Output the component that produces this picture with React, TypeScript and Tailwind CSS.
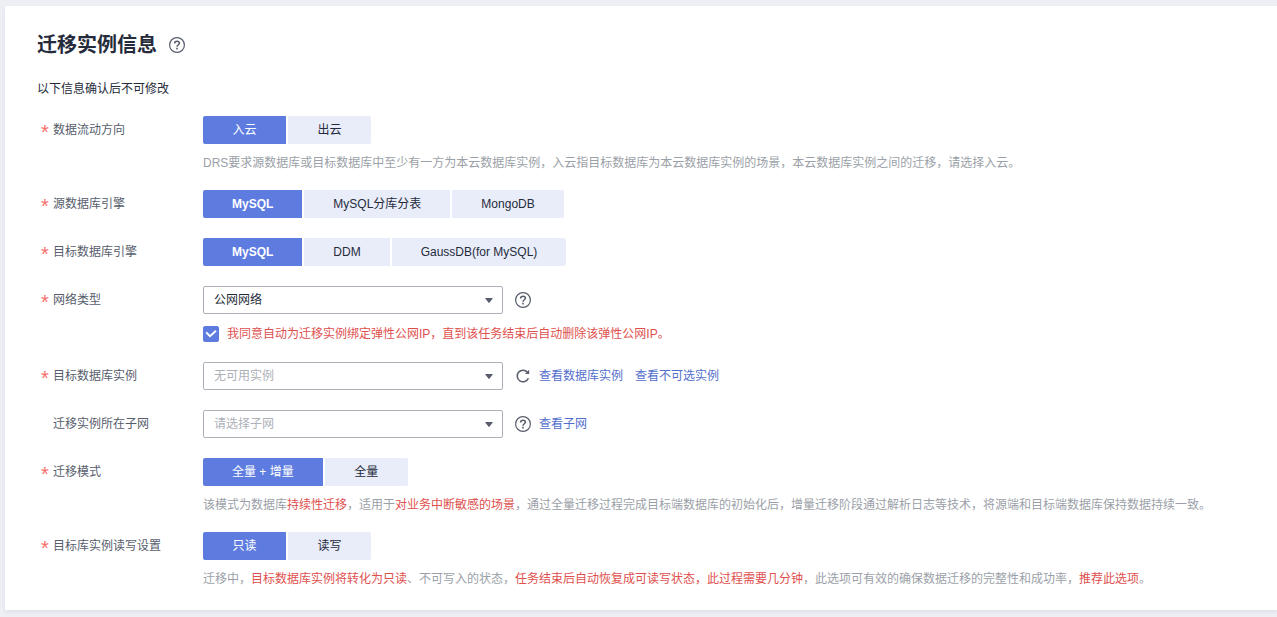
import { useId, useState, type ReactNode } from 'react';
import clsx from 'clsx';

type RowProps = {
  label: string;
  htmlFor?: string;
  labelId?: string;
  required?: boolean;
  children: ReactNode;
};

function Row({ label, htmlFor, labelId, required = true, children }: RowProps) {
  return (
    <div className="flex items-start">
      <div className="flex h-7 w-[166px] shrink-0 items-center text-[#575d6c]">
        <span className="w-4 pl-1 pt-1 text-xl leading-5 text-[#f66f6a]" aria-hidden="true">
          {required ? '*' : ''}
        </span>
        {htmlFor ? (
          <label htmlFor={htmlFor}>{label}</label>
        ) : (
          <span id={labelId}>{label}</span>
        )}
      </div>
      <div className="min-w-0 flex-1">{children}</div>
    </div>
  );
}

type ChoiceRowProps = {
  label: string;
  options: string[];
  children?: ReactNode;
};

// Product names get a heavier weight when selected, Chinese labels stay regular
const isLatin = (text: string) => /^[\x20-\x7e]+$/.test(text);

function ChoiceRow({ label, options, children }: ChoiceRowProps) {
  const id = useId();
  const [selected, setSelected] = useState(options[0]);

  return (
    <Row label={label} labelId={id}>
      <div role="group" aria-labelledby={id} className="flex gap-0.5">
        {options.map((option) => {
          const active = option === selected;
          return (
            <button
              key={option}
              type="button"
              aria-pressed={active}
              onClick={() => setSelected(option)}
              className={clsx(
                'h-7 min-w-[83px] cursor-pointer px-[29px] first:rounded-l-xs last:rounded-r-xs',
                active ? 'bg-[#5e7ce0] text-white' : 'bg-[#e9edfa] text-[#252b3a]',
                active && isLatin(option) && 'font-bold',
              )}
            >
              {option}
            </button>
          );
        })}
      </div>
      {children && <p className="mt-[11px] -mb-px leading-4 text-[#9b9fa8]">{children}</p>}
    </Row>
  );
}

type DropdownProps = {
  id: string;
  value: string;
  muted?: boolean;
};

function Dropdown({ id, value, muted }: DropdownProps) {
  return (
    <div className="relative w-[300px]">
      <select
        id={id}
        className={clsx(
          'block h-7 w-full appearance-none rounded-xs border border-[#adb0b8] bg-white px-2.5',
          muted ? 'text-[#adb0b8]' : 'text-[#252b3a]',
        )}
      >
        <option>{value}</option>
      </select>
      <svg
        className="pointer-events-none absolute right-2.5 top-3 h-[5px] w-2 text-[#575d6c]"
        viewBox="0 0 8 5"
        fill="currentColor"
      >
        <path d="M0.6 0H7.4Q8 0 7.7 0.6L4.6 4.6Q4 5.2 3.4 4.6L0.3 0.6Q0 0 0.6 0Z" />
      </svg>
    </div>
  );
}

function HelpIcon() {
  return (
    <button type="button" aria-label="帮助" className="h-4 w-4 shrink-0 cursor-pointer text-[#575d6c]">
      <svg className="h-4 w-4" viewBox="0 0 16 16" fill="none" stroke="currentColor">
        <circle cx="8" cy="8" r="7.4" strokeWidth="1.2" />
        <path d="M5.6 6.5C5.6 5 6.6 4.2 8 4.2S10.4 5 10.4 6.3C10.4 7.7 8 7.9 8 9.7" strokeWidth="1.5" />
        <path d="M8 10.8V12.4" strokeWidth="1.6" />
      </svg>
    </button>
  );
}

function RefreshIcon() {
  return (
    <button type="button" aria-label="刷新" className="h-4 w-4 shrink-0 cursor-pointer text-[#575d6c]">
      <svg className="h-4 w-4" viewBox="0 0 16 16" fill="none" stroke="currentColor">
        <path d="M12.8 4.6A5.8 5.8 0 1 0 13.4 10.2" strokeWidth="1.5" />
        <path d="M14.2 1.8V6H10Z" fill="currentColor" stroke="none" />
      </svg>
    </button>
  );
}

function Link({ children }: { children: ReactNode }) {
  return (
    <a href="#" className="text-[#526ecc]">
      {children}
    </a>
  );
}

function Warn({ children }: { children: ReactNode }) {
  return <span className="text-[#de504e]">{children}</span>;
}

export default function App() {
  return (
    <div
      lang="zh-CN"
      className="min-h-screen bg-[#eeeff5] pl-[5px] pt-1.5 font-['Liberation_Sans','Noto_Sans_CJK_SC',sans-serif] text-xs text-[#252b3a]"
    >
      <main className="bg-white px-8 pb-6 pt-[23px] shadow-[0_2px_4px_rgba(40,50,80,0.08)]">
        <div className="flex h-8 items-center gap-3">
          <h1 className="text-xl font-bold">迁移实例信息</h1>
          <HelpIcon />
        </div>
        <p className="mt-5 leading-4">以下信息确认后不可修改</p>

        <form className="mt-[19px] flex flex-col gap-5">
          <ChoiceRow label="数据流动方向" options={['入云', '出云']}>
            DRS要求源数据库或目标数据库中至少有一方为本云数据库实例，入云指目标数据库为本云数据库实例的场景，本云数据库实例之间的迁移，请选择入云。
          </ChoiceRow>

          <ChoiceRow label="源数据库引擎" options={['MySQL', 'MySQL分库分表', 'MongoDB']} />

          <ChoiceRow label="目标数据库引擎" options={['MySQL', 'DDM', 'GaussDB(for MySQL)']} />

          <Row label="网络类型" htmlFor="network">
            <div className="flex items-center gap-3">
              <Dropdown id="network" value="公网网络" />
              <HelpIcon />
            </div>
            <div className="mt-3 flex h-4 items-center gap-2">
              <span className="relative h-4 w-4">
                <input
                  id="agree"
                  type="checkbox"
                  defaultChecked
                  className="peer block h-4 w-4 appearance-none rounded-xs border border-[#adb0b8] bg-white checked:border-[#5e7ce0] checked:bg-[#5e7ce0]"
                />
                <svg
                  className="pointer-events-none absolute inset-0 hidden h-4 w-4 text-white peer-checked:block"
                  viewBox="0 0 16 16"
                  fill="none"
                  stroke="currentColor"
                  strokeWidth="2"
                >
                  <path d="M3.2 6.4L7 10.2L13 4.8" />
                </svg>
              </span>
              <label htmlFor="agree" className="leading-4">
                <Warn>我同意自动为迁移实例绑定弹性公网IP，直到该任务结束后自动删除该弹性公网IP。</Warn>
              </label>
            </div>
          </Row>

          <Row label="目标数据库实例" htmlFor="instance">
            <div className="flex items-center gap-3">
              <Dropdown id="instance" value="无可用实例" muted />
              <div className="flex items-center gap-2">
                <RefreshIcon />
                <div className="flex gap-3">
                  <Link>查看数据库实例</Link>
                  <Link>查看不可选实例</Link>
                </div>
              </div>
            </div>
          </Row>

          <Row label="迁移实例所在子网" htmlFor="subnet" required={false}>
            <div className="flex items-center gap-3">
              <Dropdown id="subnet" value="请选择子网" muted />
              <div className="flex items-center gap-2">
                <HelpIcon />
                <Link>查看子网</Link>
              </div>
            </div>
          </Row>

          <ChoiceRow label="迁移模式" options={['全量 + 增量', '全量']}>
            该模式为数据库<Warn>持续性迁移</Warn>，适用于<Warn>对业务中断敏感的场景</Warn>
            ，通过全量迁移过程完成目标端数据库的初始化后，增量迁移阶段通过解析日志等技术，将源端和目标端数据库保持数据持续一致。
          </ChoiceRow>

          <ChoiceRow label="目标库实例读写设置" options={['只读', '读写']}>
            迁移中，<Warn>目标数据库实例将转化为只读</Warn>、不可写入的状态，
            <Warn>任务结束后自动恢复成可读写状态，此过程需要几分钟</Warn>
            ，此选项可有效的确保数据迁移的完整性和成功率，<Warn>推荐此选项</Warn>。
          </ChoiceRow>
        </form>
      </main>
    </div>
  );
}
